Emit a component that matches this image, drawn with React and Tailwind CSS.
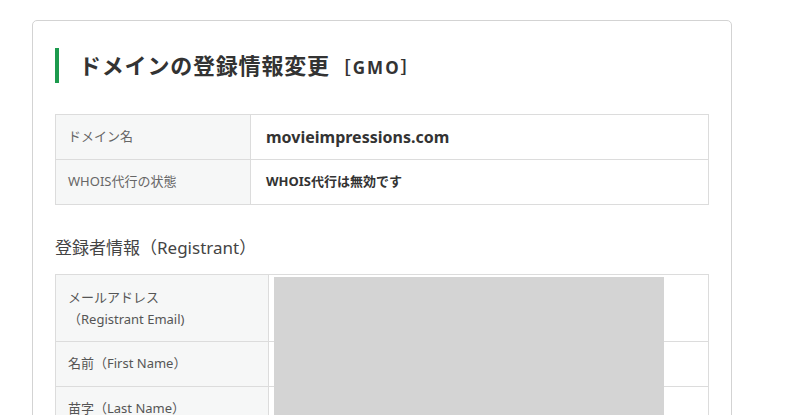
import React from 'react';

const FONT = { fontFamily: '"Noto Sans", "Noto Sans CJK JP", sans-serif' };

export default function App() {
  return (
    <div className="w-[800px] h-[415px] overflow-hidden bg-white pt-[20px] pl-[32px] text-[#333]" style={FONT}>
      <div className="w-[700px] h-[420px] border border-[#d3d3d3] rounded-[5px] bg-white pt-[26px] px-[22px]">
        <div className="flex items-center h-[36px]">
          <div className="w-[4px] h-[35px] bg-[#1c9a4d]"></div>
          <h1 className="ml-[20px] text-[22px] font-bold tracking-[0.8px] text-[#333] whitespace-nowrap">
            ドメインの登録情報変更<span className="ml-[4px] text-[17px] tracking-[2px]">［GMO］</span>
          </h1>
        </div>

        <table className="mt-[31px] w-[654px] border-collapse text-[13px]">
          <tbody>
            <tr className="h-[45px]">
              <td className="w-[195px] border border-[#dcdcdc] bg-[#f6f7f7] pl-[12px] text-[#666]">ドメイン名</td>
              <td className="border border-[#dcdcdc] pl-[15px] text-[16px] font-bold text-[#333]">movieimpressions.com</td>
            </tr>
            <tr className="h-[45px]">
              <td className="border border-[#dcdcdc] bg-[#f6f7f7] pl-[12px] text-[#666]">WHOIS代行の状態</td>
              <td className="border border-[#dcdcdc] pl-[15px] font-bold text-[#333]">WHOIS代行は無効です</td>
            </tr>
          </tbody>
        </table>

        <h2 className="mt-[30px] text-[17px] text-[#444] leading-[26px]">登録者情報（Registrant）</h2>

        <div className="relative mt-[13px] w-[654px]">
          <table className="w-full border-collapse text-[13px] text-[#555]">
            <tbody>
              <tr className="h-[67px]">
                <td className="w-[213px] border border-[#dcdcdc] bg-[#f6f7f7] pl-[12px] leading-[22px]">
                  メールアドレス<br />（Registrant Email)
                </td>
                <td className="border border-[#dcdcdc]"></td>
              </tr>
              <tr className="h-[45px]">
                <td className="border border-[#dcdcdc] bg-[#f6f7f7] pl-[12px]">名前（First Name）</td>
                <td className="border border-[#dcdcdc]"></td>
              </tr>
              <tr className="h-[45px]">
                <td className="border border-[#dcdcdc] bg-[#f6f7f7] pl-[12px]">苗字（Last Name）</td>
                <td className="border border-[#dcdcdc]"></td>
              </tr>
            </tbody>
          </table>
          <div className="absolute left-[219px] top-[3px] w-[390px] h-[200px] bg-[#d4d4d4]"></div>
        </div>
      </div>
    </div>
  );
}
